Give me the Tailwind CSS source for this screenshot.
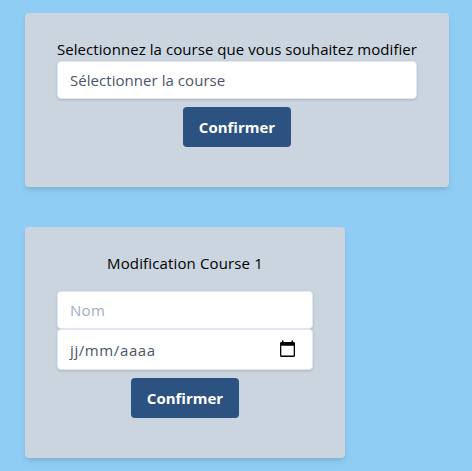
<!DOCTYPE html>
<html lang="fr">
<head>
<meta charset="utf-8">
<title>Modifier une course</title>
<script src="https://cdn.jsdelivr.net/npm/@tailwindcss/browser@4"></script>
</head>
<body class="h-[471px] overflow-hidden bg-[#90cdf4] pl-[25px] pt-[13px] text-[15px] leading-6 text-black font-['Open_Sans','Noto_Sans',sans-serif]">
  <form class="flex h-[174px] w-[424px] flex-col items-center rounded bg-[#cbd5e0] px-8 pt-6 shadow-[0_4px_6px_-1px_rgba(0,0,0,0.1),0_2px_4px_-1px_rgba(0,0,0,0.06)]">
    <label class="whitespace-nowrap tracking-[0.06px]">Selectionnez la course que vous souhaitez modifier</label>
    <div class="flex h-[38px] w-full items-center rounded border border-[#e2e8f0] bg-white px-3 tracking-[0.05px] text-[#4a5568] shadow-[0_1px_3px_rgba(0,0,0,0.1),0_1px_2px_rgba(0,0,0,0.06)]"><span>Sélectionner la course</span></div>
    <button type="button" class="mt-2 h-10 w-[108px] rounded bg-[#2c5282] font-bold text-white"><span>Confirmer</span></button>
  </form>
  <form class="mt-10 flex h-[231px] w-80 flex-col items-center rounded bg-[#cbd5e0] px-8 pt-6 shadow-[0_4px_6px_-1px_rgba(0,0,0,0.1),0_2px_4px_-1px_rgba(0,0,0,0.06)]">
    <h2 class="mb-4 whitespace-nowrap tracking-[0.14px]"><span>Modification Course 1</span></h2>
    <div class="flex h-[38px] w-full items-center rounded border border-[#e2e8f0] bg-white px-3 tracking-[0.3px] text-[#a0aec0] shadow-[0_1px_3px_rgba(0,0,0,0.1),0_1px_2px_rgba(0,0,0,0.06)]"><span>Nom</span></div>
    <div class="flex h-[41px] w-full items-center justify-between rounded border border-[#e2e8f0] bg-white pl-3 pr-[17px] text-[#4a5568] shadow-[0_1px_3px_rgba(0,0,0,0.1),0_1px_2px_rgba(0,0,0,0.06)]">
      <span class="tracking-[0.6px]">jj/mm/aaaa</span>
      <svg class="h-[19px] w-[15px]" viewBox="0 0 15 19" fill="none"><path d="M2 .5h1.500V2h8V.5H13V2h.7Q15 2 15 3.300v12.200q0 1.500-1.500 1.500h-12Q0 17 0 15.500V3.300Q0 2 1.300 2H2zM1.300 5.800v9.700h12.400V5.800z" fill="#000" fill-rule="evenodd"/></svg>
    </div>
    <button type="button" class="mt-2 h-10 w-[108px] rounded bg-[#2c5282] font-bold text-white"><span>Confirmer</span></button>
  </form>
</body>
</html>
